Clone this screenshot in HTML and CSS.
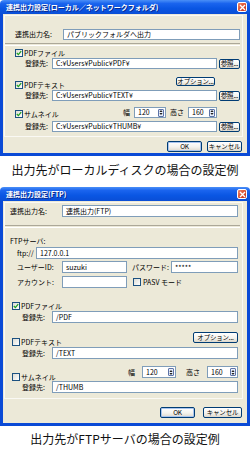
FILE: index.html
```html
<!DOCTYPE html>
<html lang="ja">
<head>
  <meta charset="UTF-8">
  <meta name="viewport" content="width=device-width, initial-scale=1.0">
  <title>連携出力設定</title>
  <link rel="stylesheet" href="styles.css">
</head>
<body>

<!-- ローカル／ネットワークフォルダ -->
<div class="dialog">
  <div class="titlebar">
    <span class="title">連携出力設定(ローカル／ネットワークフォルダ)</span>
    <span class="close"><svg width="7" height="7" viewBox="0 0 7 7"><path d="M1 1L6 6M6 1L1 6" stroke="#fff" stroke-width="1.4"/></svg></span>
  </div>
  <div class="frame">
    <div class="panel local">
      <div class="row name-row">
        <span class="lbl name-lbl">連携出力名:</span>
        <div class="field name-field">パブリックフォルダへ出力</div>
      </div>
      <div class="sep"></div>
      <div class="row check-row pdf-row">
        <span class="check on"><svg width="6" height="6" viewBox="0 0 6 6"><path d="M0.8 3L2.4 4.6L5.2 1.2" fill="none" stroke="#21A121" stroke-width="1.3"/></svg></span>
        <span class="lbl">PDFファイル</span>
      </div>
      <div class="row dest-row">
        <span class="lbl dest-lbl">登録先:</span>
        <div class="field dest-field">C:¥Users¥Public¥PDF¥</div>
        <div class="btn browse">参照...</div>
      </div>
      <div class="row opt-row">
        <div class="check-group">
          <span class="check on"><svg width="6" height="6" viewBox="0 0 6 6"><path d="M0.8 3L2.4 4.6L5.2 1.2" fill="none" stroke="#21A121" stroke-width="1.3"/></svg></span>
          <span class="lbl">PDFテキスト</span>
        </div>
        <div class="btn option">オプション...</div>
      </div>
      <div class="row dest-row">
        <span class="lbl dest-lbl">登録先:</span>
        <div class="field dest-field">C:¥Users¥Public¥TEXT¥</div>
        <div class="btn browse">参照...</div>
      </div>
      <div class="row thumb-row">
        <div class="check-group">
          <span class="check on"><svg width="6" height="6" viewBox="0 0 6 6"><path d="M0.8 3L2.4 4.6L5.2 1.2" fill="none" stroke="#21A121" stroke-width="1.3"/></svg></span>
          <span class="lbl">サムネイル</span>
        </div>
        <div class="size-group">
          <span class="lbl w-lbl">幅</span>
          <div class="field spin sp-w">120<span class="spin-btn"><svg width="5" height="7" viewBox="0 0 5 7"><path d="M2.5 0.5L4.5 2.8H0.5Z M2.5 6.5L4.5 4.2H0.5Z" fill="#222"/></svg></span></div>
          <span class="lbl h-lbl">高さ</span>
          <div class="field spin sp-h">160<span class="spin-btn"><svg width="5" height="7" viewBox="0 0 5 7"><path d="M2.5 0.5L4.5 2.8H0.5Z M2.5 6.5L4.5 4.2H0.5Z" fill="#222"/></svg></span></div>
        </div>
      </div>
      <div class="row dest-row last-dest">
        <span class="lbl dest-lbl">登録先:</span>
        <div class="field dest-field">C:¥Users¥Public¥THUMB¥</div>
        <div class="btn browse">参照...</div>
      </div>
    </div>
    <div class="buttons">
      <div class="btn ok">OK</div>
      <div class="btn cancel">キャンセル</div>
    </div>
  </div>
</div>
<p class="caption">出力先がローカルディスクの場合の設定例</p>

<!-- FTP -->
<div class="dialog ftp">
  <div class="titlebar">
    <span class="title">連携出力設定(FTP)</span>
    <span class="close"><svg width="7" height="7" viewBox="0 0 7 7"><path d="M1 1L6 6M6 1L1 6" stroke="#fff" stroke-width="1.4"/></svg></span>
  </div>
  <div class="frame">
    <div class="panel">
      <div class="row name-row">
        <span class="lbl name-lbl">連携出力名:</span>
        <div class="field name-field">連携出力(FTP)</div>
      </div>
      <div class="sep"></div>
      <div class="row server-row">
        <span class="lbl">FTPサーバ:</span>
      </div>
      <div class="row host-row">
        <span class="lbl host-lbl">ftp://</span>
        <div class="field host-field">127.0.0.1</div>
      </div>
      <div class="row user-row">
        <span class="lbl user-lbl">ユーザーID:</span>
        <div class="field user-field">suzuki</div>
        <span class="lbl pass-lbl">パスワード:</span>
        <div class="field pass-field">*****</div>
      </div>
      <div class="row user-row account-row">
        <span class="lbl user-lbl">アカウント:</span>
        <div class="field user-field"></div>
        <span class="check pasv"></span>
        <span class="lbl">PASV モード</span>
      </div>
      <div class="row check-row pdf-row">
        <span class="check on"><svg width="6" height="6" viewBox="0 0 6 6"><path d="M0.8 3L2.4 4.6L5.2 1.2" fill="none" stroke="#21A121" stroke-width="1.3"/></svg></span>
        <span class="lbl">PDFファイル</span>
      </div>
      <div class="row dest-row">
        <span class="lbl dest-lbl">登録先:</span>
        <div class="field dest-field">/PDF</div>
      </div>
      <div class="row opt-row">
        <div class="check-group">
          <span class="check"></span>
          <span class="lbl">PDFテキスト</span>
        </div>
        <div class="btn option">オプション...</div>
      </div>
      <div class="row dest-row">
        <span class="lbl dest-lbl">登録先:</span>
        <div class="field dest-field">/TEXT</div>
      </div>
      <div class="row thumb-row">
        <div class="check-group">
          <span class="check"></span>
          <span class="lbl">サムネイル</span>
        </div>
        <div class="size-group">
          <span class="lbl w-lbl">幅</span>
          <div class="field spin sp-w">120<span class="spin-btn"><svg width="5" height="7" viewBox="0 0 5 7"><path d="M2.5 0.5L4.5 2.8H0.5Z M2.5 6.5L4.5 4.2H0.5Z" fill="#222"/></svg></span></div>
          <span class="lbl h-lbl">高さ</span>
          <div class="field spin sp-h">160<span class="spin-btn"><svg width="5" height="7" viewBox="0 0 5 7"><path d="M2.5 0.5L4.5 2.8H0.5Z M2.5 6.5L4.5 4.2H0.5Z" fill="#222"/></svg></span></div>
        </div>
      </div>
      <div class="row dest-row last-dest">
        <span class="lbl dest-lbl">登録先:</span>
        <div class="field dest-field">/THUMB</div>
      </div>
    </div>
    <div class="buttons">
      <div class="btn ok">OK</div>
      <div class="btn cancel">キャンセル</div>
    </div>
  </div>
</div>
<p class="caption ftp-caption">出力先がFTPサーバの場合の設定例</p>

</body>
</html>
```

FILE: styles.css
```css
body {
  margin: 0;
  width: 250px;
  background: #fff;
  font-family: "Noto Sans CJK JP", "Noto Sans", sans-serif;
  color: #000;
}

/* window chrome */
.dialog {
  display: flex;
  flex-direction: column;
}
.titlebar {
  height: 14px;
  display: flex;
  align-items: center;
  justify-content: space-between;
  padding: 0 3px 0 6px;
  background: linear-gradient(#4A8FF7, #1A64EE 25%, #0A56E3 60%, #0A4ED6);
  border-radius: 4px 4px 0 0;
}
.title {
  color: #fff;
  font-size: 7px;
  font-weight: bold;
  line-height: 1;
  text-shadow: 1px 1px 0 #0B2A8C;
}
.close {
  width: 10px;
  height: 10px;
  box-sizing: border-box;
  border: 1px solid #fff;
  border-radius: 2px;
  background: linear-gradient(135deg, #F08A6C, #D8482A 60%, #C23A1E);
  display: flex;
  align-items: center;
  justify-content: center;
}
.frame {
  display: flex;
  flex-direction: column;
  border: 3px solid #0A4AD6;
  border-top: 0;
  background: #ECE9D8;
  padding-bottom: 1px;
}
.panel {
  display: flex;
  flex-direction: column;
  margin: 1px 4px 0 1px;
  border: 1px solid #FAF9F4;
  padding-bottom: 4px;
}

/* rows */
.row {
  display: flex;
  align-items: center;
  font-size: 7px;
  line-height: 1;
}
.lbl {
  white-space: nowrap;
}
.field {
  box-sizing: border-box;
  height: 100%;
  background: #fff;
  border: 1px solid #7F9DB9;
  padding-left: 3px;
  display: flex;
  align-items: center;
  font-size: 7px;
  white-space: nowrap;
  overflow: hidden;
}
.btn {
  box-sizing: border-box;
  border: 1px solid #003C74;
  border-radius: 2px;
  background: linear-gradient(#FFFFFF, #F4F3EE 55%, #DDD8CC);
  display: flex;
  align-items: center;
  justify-content: center;
  font-size: 6.5px;
  line-height: 1;
  white-space: nowrap;
  letter-spacing: -0.2px;
}
.check {
  width: 8px;
  height: 8px;
  box-sizing: border-box;
  border: 1px solid #1C5180;
  background: linear-gradient(135deg, #DCDCD5, #FFFFFF);
  display: flex;
  align-items: center;
  justify-content: center;
  flex: none;
  margin-right: 1px;
}
.check-group {
  display: flex;
  align-items: center;
  align-self: flex-end;
}
.sep {
  height: 1px;
  margin: 3px 2px 0 0;
  border-top: 1px solid #ACA899;
  border-bottom: 1px solid #fff;
}

.name-row { height: 11px; margin-top: 13px; padding-left: 10px; }
.name-lbl { width: 48px; }
.name-field { width: 177px; }

.check-row { height: 8px; margin-top: 3px; padding-left: 10px; }

.dest-row { height: 11px; margin-top: 1px; padding-left: 20px; }
.dest-lbl { width: 27px; }
.dest-field { width: 165px; }
.browse { width: 21px; height: 10px; margin-left: 2px; }

.opt-row { height: 12px; margin-top: 8px; padding-left: 10px; align-items: flex-start; }
.option { width: 39px; height: 9px; margin: 0 27px 0 auto; }

.thumb-row { height: 11px; margin-top: 6px; padding-left: 10px; align-items: flex-start; }
.size-group { display: flex; align-items: center; height: 100%; margin: 0 25px 0 auto; }
.w-lbl { width: 11px; }
.h-lbl { width: 18px; margin-left: 4px; }
.sp-w { width: 32px; }
.sp-h { width: 29px; }
.spin-btn {
  width: 6px;
  height: 8px;
  margin: 0 1px 0 auto;
  box-sizing: border-box;
  border: 1px solid #5D73A8;
  border-radius: 1px;
  background: #E6EDFB;
  display: flex;
  align-items: center;
  justify-content: center;
}
.last-dest { margin-top: 3px; }

.buttons {
  display: flex;
  justify-content: flex-end;
  gap: 5px;
  height: 11px;
  margin-top: 4px;
  padding-right: 5px;
}
.ok, .cancel { width: 35px; height: 11px; }
.ok { box-shadow: inset 0 0 0 1px #A8C4EE; }

.caption {
  margin: 0;
  height: 31px;
  box-sizing: border-box;
  padding-top: 8px;
  text-align: center;
  font-size: 12px;
  line-height: 12px;
  color: #111;
}

/* FTP dialog */
.ftp .panel { padding-bottom: 5px; }
.ftp .name-row { height: 12px; margin-top: 2px; padding-left: 5px; }
.ftp .name-lbl { width: 52px; }
.ftp .name-field { width: 176px; }
.ftp .sep { margin-top: 8px; }
.server-row { height: 10px; margin-top: 8px; padding-left: 5px; }
.host-row { height: 12px; margin-top: 1px; padding-left: 12px; }
.host-lbl { width: 19px; }
.host-field { width: 202px; }
.user-row { height: 12px; margin-top: 2px; padding-left: 12px; }
.account-row { margin-top: 3px; }
.user-lbl { width: 45px; }
.user-field { width: 65px; }
.pass-lbl { width: 39px; margin-left: 5px; }
.pass-field { width: 67px; }
.pasv { margin: 0 2px 0 6px; }
.ftp .pdf-row { margin-top: 14px; padding-left: 7px; }
.ftp .dest-row { height: 12px; padding-left: 17px; }
.ftp .dest-lbl { width: 30px; }
.ftp .dest-field { width: 186px; }
.ftp .opt-row { height: 14px; margin-top: 9px; padding-left: 7px; }
.ftp .option { width: 45px; height: 11px; margin-right: 4px; }
.ftp .thumb-row { height: 15px; margin-top: 7px; padding-left: 7px; }
.ftp .size-group { height: 12px; margin-right: 4px; }
.ftp .w-lbl { width: 14px; }
.ftp .h-lbl { width: 21px; margin-left: 10px; }
.ftp .sp-w { width: 34px; }
.ftp .sp-h { width: 31px; }
.ftp .last-dest { margin-top: 0; }
.ftp .buttons { gap: 8px; margin-top: 8px; }
.ftp .frame { padding-bottom: 5px; }
.ftp .cancel { width: 39px; }
.ftp-caption { padding-top: 7px; }
```
